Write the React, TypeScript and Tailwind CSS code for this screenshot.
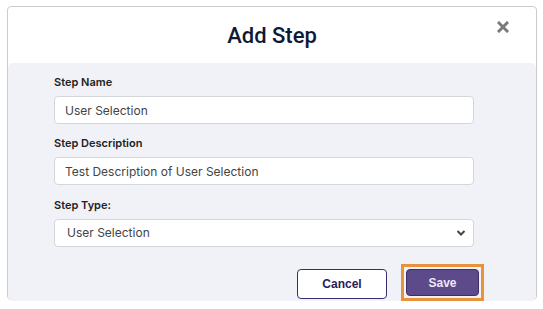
import React from 'react';

function Field({ label, children, className = '' }: { label: string; children: React.ReactNode; className?: string }) {
  return (
    <div className={className}>
      <label className="block text-[11px] leading-[14px] font-semibold text-[#222]">{label}</label>
      <div className="mt-[7px]">{children}</div>
    </div>
  );
}

export default function App() {
  const inputCls =
    'block w-full h-[28px] rounded-[4px] border border-[#d3d6db] bg-white px-[10px] text-[12px] text-[#444] outline-none';
  return (
    <div className="w-[543px] h-[309px] bg-white pt-[6px] pl-[7px]" style={{ fontFamily: 'Inter, "Noto Sans", sans-serif' }}>
      <div className="w-[530px] h-[294px] rounded-[4px] border border-[#cbcbcb] bg-white flex flex-col">
        <div className="relative h-[56px] shrink-0 flex items-center justify-center">
          <h1
            className="text-[22px] font-medium text-[#0f1936] leading-none mt-[2px]"
            style={{ fontFamily: 'Roboto, "Liberation Sans", Arial, sans-serif' }}
          >
            Add Step
          </h1>
          <button className="absolute right-[26px] top-[13px] w-[14px] h-[14px] flex items-center justify-center">
            <svg width="12" height="12" viewBox="0 0 12 12">
              <path d="M2 2 L10 10 M10 2 L2 10" stroke="#7a7a7a" strokeWidth="3" strokeLinecap="square" />
            </svg>
          </button>
        </div>
        <div className="flex-1 rounded-[5px] bg-[#f1f2f7] pl-[46px] pr-[62px] pt-[12px]">
          <Field label="Step Name">
            <input className={inputCls} defaultValue="User Selection" />
          </Field>
          <Field label="Step Description" className="mt-[12px]">
            <input className={inputCls} defaultValue="Test Description of User Selection" />
          </Field>
          <Field label="Step Type:" className="mt-[13px]">
            <div className="relative">
              <select className={inputCls + ' appearance-none pl-[12px]'} defaultValue="User Selection">
                <option>User Selection</option>
              </select>
              <svg className="absolute right-[8px] top-[10px]" width="10" height="8" viewBox="0 0 10 8">
                <path d="M1.5 2 L5 5.5 L8.5 2" fill="none" stroke="#444" strokeWidth="2" />
              </svg>
            </div>
          </Field>
          <div
            className="flex justify-end items-start gap-[14px] mt-[17px] -mr-[10px]"
            style={{ fontFamily: '"Liberation Sans", Arial, sans-serif' }}
          >
            <button className="mt-[5px] w-[90px] h-[30px] rounded-[4px] border border-[#3a2a6e] bg-white text-[12px] font-bold text-[#2b1c5a]">
              Cancel
            </button>
            <span className="block border-[3px] border-[#e8923c] p-[2px]">
              <button className="block w-[73px] h-[27px] rounded-[4px] border border-[#3d2f66] bg-[#5c4a8b] text-[12px] font-bold text-[#ece8f6]">
                Save
              </button>
            </span>
          </div>
        </div>
      </div>
    </div>
  );
}
